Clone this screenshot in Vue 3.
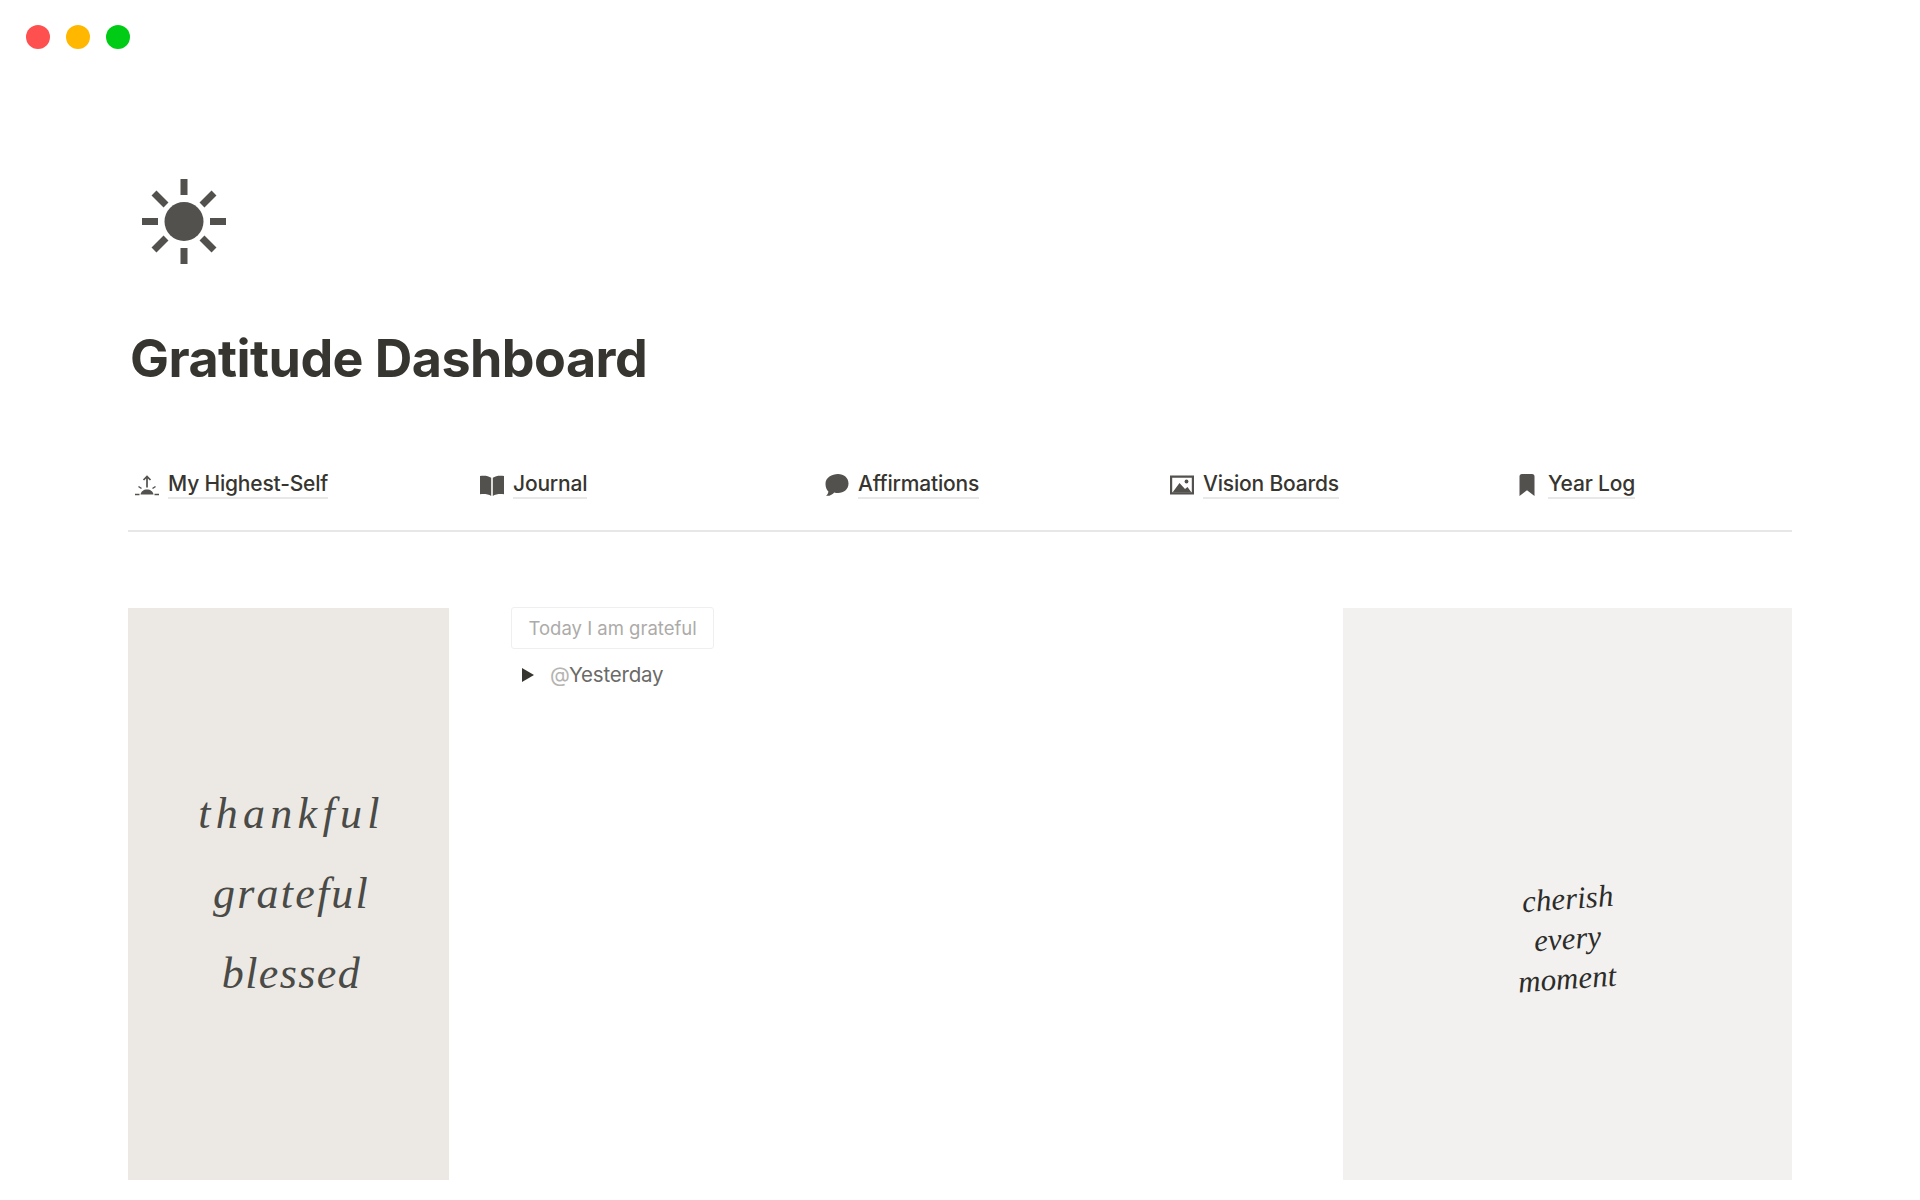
<script setup>
const links = [
  { name: 'My Highest-Self', icon: 'sunrise' },
  { name: 'Journal', icon: 'book' },
  { name: 'Affirmations', icon: 'bubble' },
  { name: 'Vision Boards', icon: 'image' },
  { name: 'Year Log', icon: 'bookmark' }
]
</script>

<template>
  <div class="page">
    <div class="window-dots">
      <span class="dot red"></span>
      <span class="dot amber"></span>
      <span class="dot green"></span>
    </div>

    <main class="content">
      <svg class="sun" viewBox="0 0 86 86" aria-hidden="true">
        <circle cx="43" cy="42.500" r="19.500" fill="#53514d" />
        <g stroke="#53514d" stroke-width="7">
          <path d="M43 0v16M43 69v16M1 42.500h16M69 42.500h16" />
          <path d="M13 14l12 12M61 59l12 12M73 14L61 26M25 59L13 71" />
        </g>
      </svg>

      <h1 class="title">Gratitude Dashboard</h1>

      <nav class="links">
        <a v-for="link in links" :key="link.name" class="link">
          <svg class="icon" viewBox="0 0 24 24" aria-hidden="true">
            <g v-if="link.icon === 'sunrise'" fill="#53514d">
              <path d="M5.500 21.500C6 18.500 8.500 16.500 12 16.500s6 2 6.500 5z" />
              <path d="M12 14.500V3.500M8.500 7L12 3.500 15.500 7" fill="none" stroke="#53514d" stroke-width="1.700" />
              <path d="M0 21.500h4.500M19.500 21.500H24M3.500 13.500l3 2M20.500 13.500l-3 2" fill="none" stroke="#53514d" stroke-width="1.500" />
            </g>
            <path
              v-else-if="link.icon === 'book'"
              fill="#53514d"
              d="M0 3c4.500-.6 8.500-.1 11.200 1.800V23C8.500 21.200 4.500 20.700 0 21.200zM24 3c-4.500-.6-8.500-.1-11.200 1.800V23c2.700-1.800 6.700-2.300 11.200-1.800z"
            />
            <path
              v-else-if="link.icon === 'bubble'"
              fill="#53514d"
              d="M13 1C18.800 1 23.500 4.800 23.500 10.500S18.800 20 13 20c-1.400 0-2.600-.2-3.800-.6C7.800 21 4.700 23.300 1 22.800c1.300-1 2.200-2.500 2.400-4.300C1.300 16.700.5 13.800.5 10.500.5 4.800 7 1 13 1z"
            />
            <g v-else-if="link.icon === 'image'">
              <path fill="#53514d" fill-rule="evenodd" d="M0 2.500h24v19H0zM2.200 4.700v14.600h19.600V4.700z" />
              <path fill="#53514d" d="M2.500 19.500L9.500 10l5.500 6 2.500-2 4 5.500z" />
              <circle cx="16.500" cy="8.500" r="1.900" fill="#53514d" />
            </g>
            <path
              v-else
              fill="#53514d"
              d="M7 1h10a2.500 2.500 0 0 1 2.500 2.500V23L12 17.200 4.500 23V3.500A2.500 2.500 0 0 1 7 1z"
            />
          </svg>
          <span class="link-text">{{ link.name }}</span>
        </a>
      </nav>

      <section class="columns">
        <div class="card card-left">
          <span class="script thankful">thankful</span>
          <span class="script grateful">grateful</span>
          <span class="script blessed">blessed</span>
        </div>

        <div class="middle">
          <div class="tag">Today I am grateful</div>
          <div class="toggle">
            <span class="arrow"></span>
            <span class="mention"><span class="at">@</span>Yesterday</span>
          </div>
        </div>

        <div class="card card-right">
          <span class="brush">cherish</span>
          <span class="brush">every</span>
          <span class="brush">moment</span>
        </div>
      </section>
    </main>
  </div>
</template>

<style>
html,
body {
  margin: 0;
  background: #fff;
}
</style>

<style scoped>
.page {
  height: 1200px;
  overflow: hidden;
  background: #fff;
  font-family: Inter, 'Liberation Sans', sans-serif;
  color: #37352f;
}

.window-dots {
  display: flex;
  gap: 16px;
  padding: 25px 0 0 26px;
}
.dot {
  width: 24px;
  height: 24px;
  border-radius: 50%;
}
.red { background: #ff5050; }
.amber { background: #ffb700; }
.green { background: #00cc16; }

.content {
  padding: 130px 128px 0;
}

.sun {
  display: block;
  width: 86px;
  height: 86px;
  margin-left: 13px;
}

.title {
  margin: 62px 0 0;
  padding-left: 2px;
  font-size: 52px;
  line-height: 63px;
  font-weight: 700;
  letter-spacing: -0.55px;
  color: #37352f;
}

.links {
  display: grid;
  grid-template-columns: repeat(4, 345px) 1fr;
  margin-top: 81px;
  padding: 0 0 31px 7px;
  border-bottom: 2px solid #e7e7e6;
}
.link {
  display: flex;
  align-items: center;
  gap: 9px;
}
.icon {
  width: 24px;
  height: 24px;
  flex: none;
}
.link-text {
  font-size: 21px;
  line-height: 26px;
  font-weight: 500;
  letter-spacing: -0.18px;
  border-bottom: 2px solid #e8e8e7;
}

.columns {
  display: grid;
  grid-template-columns: 321px 1fr 449px;
  column-gap: 62px;
  margin-top: 76px;
}

.card {
  height: 572px;
  display: flex;
  flex-direction: column;
  align-items: center;
  justify-content: center;
  box-sizing: border-box;
}
.card-left {
  background: #ece9e4;
  gap: 28px;
}
.card-right {
  padding-top: 90px;
  background: #f2f1ef;
}

.script {
  font-family: 'Liberation Serif', serif;
  font-style: italic;
  font-size: 44px;
  line-height: 52px;
  color: #4a4a47;
  padding-left: 6px;
}
.thankful { letter-spacing: 5.3px; }
.grateful { letter-spacing: 2.2px; }
.blessed { letter-spacing: 1.4px; }

.brush {
  font-family: 'Liberation Serif', serif;
  font-style: italic;
  font-size: 31px;
  line-height: 40px;
  color: #2c2c2a;
  transform: rotate(-4deg);
}

.middle {
  margin-top: -1px;
}
.tag {
  display: inline-block;
  box-sizing: border-box;
  height: 42px;
  padding: 0 16.500px;
  border: 1px solid #efefee;
  border-radius: 3px;
  font-size: 18.500px;
  line-height: 40px;
  color: #acaba9;
}
.toggle {
  display: flex;
  align-items: center;
  height: 26px;
  margin-top: 13px;
  padding-left: 11px;
}
.arrow {
  width: 0;
  height: 0;
  border-left: 12px solid #37352f;
  border-top: 7px solid transparent;
  border-bottom: 7px solid transparent;
}
.mention {
  margin-left: 16px;
  font-size: 20.500px;
  line-height: 26px;
  letter-spacing: -0.2px;
  color: #6b6a67;
}
.at {
  color: #b5b4b2;
}
</style>
